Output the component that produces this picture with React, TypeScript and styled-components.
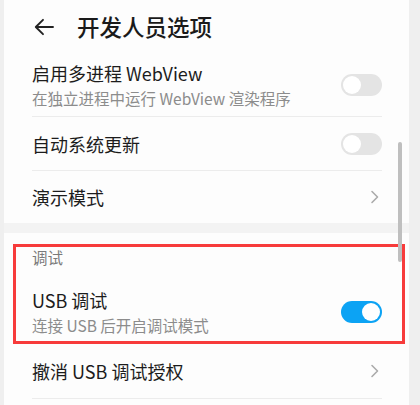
import React from "react";
import styled, { createGlobalStyle } from "styled-components";

const Global = createGlobalStyle`
  html, body { margin: 0; padding: 0; background: #efefef; }
  body { font-family: "Noto Sans CJK SC", "Noto Sans", sans-serif; }
  * { box-sizing: border-box; }
`;

const Screen = styled.div`
  position: relative;
  width: 405px;
  height: 405px;
  margin-left: 4px;
  background: #fdfdfd;
  overflow: hidden;
  display: flex;
  flex-direction: column;
`;

const Header = styled.div`
  height: 54px;
  display: flex;
  align-items: center;
  padding: 0 0 0 30px;
  gap: 23px;
  flex-shrink: 0;
`;

const Title = styled.div`
  font-size: 22.5px;
  font-weight: 500;
  color: #1a1a1a;
  line-height: 1;
  margin-top: -2px;
`;

const Group = styled.div`
  position: relative;
  display: flex;
  flex-direction: column;
  padding: 0 27px 0 28px;
  background: #fdfdfd;
`;

const Band = styled.div`
  height: 10px;
  background: #f3f3f3;
  flex-shrink: 0;
`;

const Row = styled.div<{ $h: number; $line?: boolean }>`
  height: ${(p) => p.$h}px;
  display: flex;
  align-items: center;
  justify-content: space-between;
  border-bottom: ${(p) => (p.$line ? "1px solid #ececec" : "none")};
  flex-shrink: 0;
`;

const Texts = styled.div`
  display: flex;
  flex-direction: column;
  gap: 5px;
`;

const Label = styled.div`
  font-size: 18px;
  color: #1c1c1c;
  line-height: 22px;
`;

const Sub = styled.div`
  font-size: 15.5px;
  color: #8c8c8c;
  line-height: 19px;
`;

const SectionHead = styled.div`
  height: 48px;
  display: flex;
  align-items: center;
  font-size: 15.5px;
  color: #7a7a7a;
  flex-shrink: 0;
`;

const Track = styled.div<{ $on?: boolean }>`
  width: 41px;
  height: 22px;
  border-radius: 11px;
  background: ${(p) => (p.$on ? "#0ca3f4" : "#e4e4e4")};
  display: flex;
  align-items: center;
  justify-content: ${(p) => (p.$on ? "flex-end" : "flex-start")};
  padding: 0 2px;
  flex-shrink: 0;
`;

const Knob = styled.div`
  width: 18px;
  height: 18px;
  border-radius: 50%;
  background: #ffffff;
`;

const Highlight = styled.div`
  position: absolute;
  left: 9px;
  top: 11px;
  width: 392px;
  height: 100px;
  border: 3px solid #f73b3b;
  pointer-events: none;
`;

const ScrollThumb = styled.div`
  position: absolute;
  right: 7px;
  top: 142px;
  width: 4px;
  height: 120px;
  border-radius: 2px;
  background: #bfbfbf;
`;

const Toggle = ({ on }: { on?: boolean }) => (
  <Track $on={on}>
    <Knob />
  </Track>
);

const Chevron = () => (
  <svg width="10" height="14" viewBox="0 0 10 14" style={{ marginRight: 2 }}>
    <polyline points="2,1.5 7.5,7 2,12.5" fill="none" stroke="#ababab" strokeWidth="1.6" strokeLinecap="round" strokeLinejoin="round" />
  </svg>
);

const BackArrow = () => (
  <svg width="20" height="18" viewBox="0 0 20 18">
    <path d="M19 9 H2 M9 1.8 L1.8 9 L9 16.2" fill="none" stroke="#222" strokeWidth="1.9" strokeLinecap="round" strokeLinejoin="round" />
  </svg>
);

export default function App() {
  return (
    <>
      <Global />
      <Screen>
        <Header>
          <BackArrow />
          <Title>开发人员选项</Title>
        </Header>
        <Group>
          <Row $h={63} $line>
            <Texts>
              <Label>启用多进程 WebView</Label>
              <Sub>在独立进程中运行 WebView 渲染程序</Sub>
            </Texts>
            <Toggle />
          </Row>
          <Row $h={54} $line>
            <Label>自动系统更新</Label>
            <Toggle />
          </Row>
          <Row $h={52}>
            <Label>演示模式</Label>
            <Chevron />
          </Row>
        </Group>
        <Band />
        <Group>
          <SectionHead>调试</SectionHead>
          <Row $h={62}>
            <Texts>
              <Label>USB 调试</Label>
              <Sub>连接 USB 后开启调试模式</Sub>
            </Texts>
            <Toggle on />
          </Row>
          <Row $h={56} $line>
            <Label>撤消 USB 调试授权</Label>
            <Chevron />
          </Row>
          <Highlight />
        </Group>
        <ScrollThumb />
      </Screen>
    </>
  );
}
